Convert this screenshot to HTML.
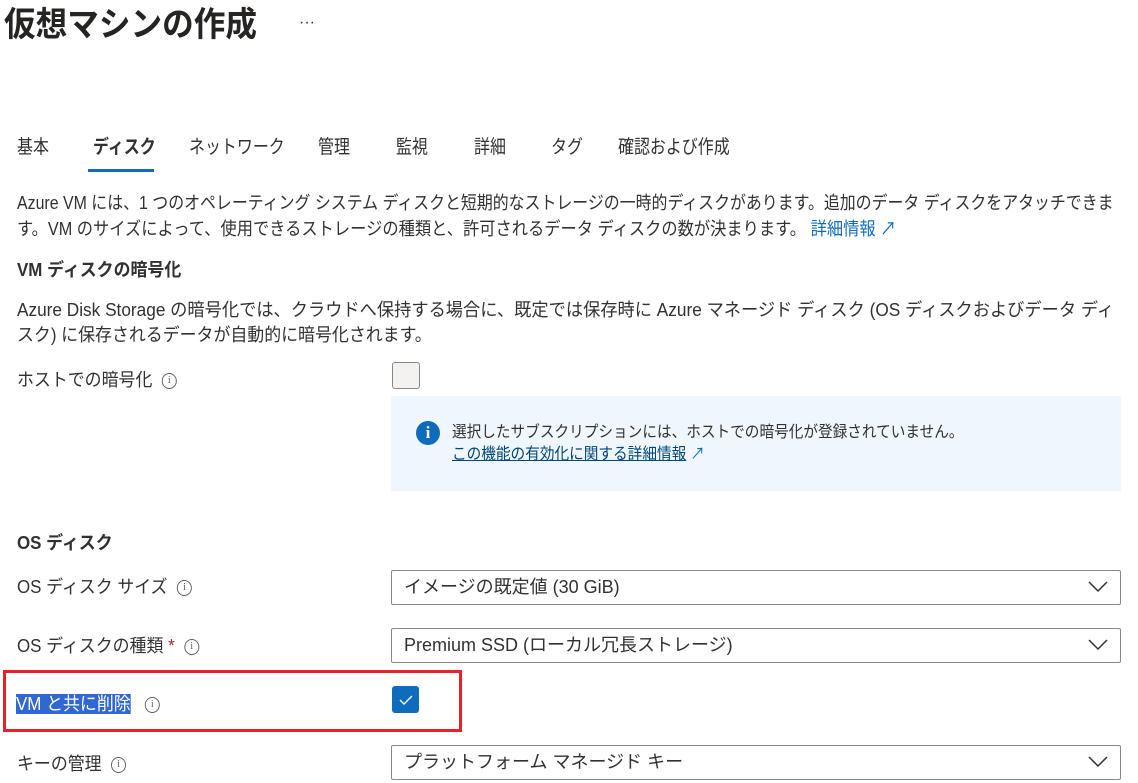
<!DOCTYPE html>
<html><head><meta charset="utf-8">
<style>
*{margin:0;padding:0;box-sizing:border-box}
body{width:1138px;height:783px;overflow:hidden;background:#fff;font-family:"Liberation Sans","Noto Sans CJK JP",sans-serif;color:#323130;position:relative}
.a{position:absolute;white-space:nowrap;transform-origin:left center}
.t{font-size:18px;line-height:26px}
.b{font-weight:bold}
.s2{transform:scaleX(0.94)}
.info{display:inline-block;width:16px;height:16px;border:1.3px solid #605e5c;border-radius:50%;font-size:11px;line-height:13px;text-align:center;color:#605e5c;font-family:"Liberation Serif",serif;vertical-align:middle}
.dd{position:absolute;left:391px;width:730px;height:35px;border:1px solid #8a8886;border-radius:2px;font-size:18px;line-height:33px;padding-left:12px;color:#323130}
.dd svg{position:absolute;right:12px;top:10px}
a{color:#0f6cbd;text-decoration:none}
.tab{position:absolute;top:134px;font-size:19px;line-height:28px;white-space:nowrap;transform-origin:left center;transform:scaleX(0.84)}
</style></head><body>
<div class="a b" style="left:4px;top:2px;font-size:34px;line-height:46px;color:#252423;transform:scaleX(0.93)">仮想マシンの作成</div>
<div class="a" style="left:299px;top:14px;font-size:16px;color:#323130">···</div>

<div class="tab" style="left:17px">基本</div>
<div class="tab b" style="left:93px">ディスク</div>
<div class="a" style="left:88px;top:169px;width:66px;height:3px;background:#0f6cbd"></div>
<div class="tab" style="left:189px">ネットワーク</div>
<div class="tab" style="left:318px">管理</div>
<div class="tab" style="left:396px">監視</div>
<div class="tab" style="left:474px">詳細</div>
<div class="tab" style="left:551px">タグ</div>
<div class="tab" style="left:618px">確認および作成</div>

<div class="a t" style="left:17px;top:190px;transform:scaleX(0.884)">Azure VM には、1 つのオペレーティング システム ディスクと短期的なストレージの一時的ディスクがあります。追加のデータ ディスクをアタッチできま</div>
<div class="a t" style="left:17px;top:216px;transform:scaleX(0.903)">す。VM のサイズによって、使用できるストレージの種類と、許可されるデータ ディスクの数が決まります。 <a>詳細情報 ↗</a></div>

<div class="a t b s2" style="left:17px;top:257px">VM ディスクの暗号化</div>
<div class="a t" style="left:17px;top:297px;transform:scaleX(0.957)">Azure Disk Storage の暗号化では、クラウドへ保持する場合に、既定では保存時に Azure マネージド ディスク (OS ディスクおよびデータ ディ</div>
<div class="a t" style="left:17px;top:322px;transform:scaleX(0.94)">スク) に保存されるデータが自動的に暗号化されます。</div>

<div class="a t s2" style="left:17px;top:367px">ホストでの暗号化 &nbsp;<span class="info">i</span></div>
<div class="a" style="left:392px;top:362px;width:28px;height:27px;border:1px solid #8a8886;border-radius:3px;background:#f3f2f1"></div>

<div class="a" style="left:391px;top:396px;width:730px;height:95px;background:#eff6fc"></div>
<div class="a" style="left:416px;top:421px;width:24px;height:24px;border-radius:50%;background:#0f6cbd;color:#fff;font-weight:bold;font-size:17px;line-height:24px;text-align:center;font-family:'Liberation Serif',serif">i</div>
<div class="a" style="left:452px;top:422px;font-size:16px;line-height:22px;transform:scaleX(0.915)">選択したサブスクリプションには、ホストでの暗号化が登録されていません。</div>
<div class="a" style="left:452px;top:444px;font-size:16px;line-height:22px;transform:scaleX(0.915)"><span style="color:#004578;text-decoration:underline">この機能の有効化に関する詳細情報</span> <span style="color:#0f6cbd">↗</span></div>

<div class="a t b s2" style="left:17px;top:530px">OS ディスク</div>

<div class="a t s2" style="left:17px;top:574px">OS ディスク サイズ &nbsp;<span class="info">i</span></div>
<div class="dd" style="top:570px">イメージの既定値 (30 GiB)<svg width="20" height="12"><path d="M1 1l9 9 9-9" fill="none" stroke="#323130" stroke-width="1.5"/></svg></div>

<div class="a t s2" style="left:17px;top:633px">OS ディスクの種類 <span style="color:#a4262c">*</span> &nbsp;<span class="info">i</span></div>
<div class="dd" style="top:628px">Premium SSD (ローカル冗長ストレージ)<svg width="20" height="12"><path d="M1 1l9 9 9-9" fill="none" stroke="#323130" stroke-width="1.5"/></svg></div>

<div class="a" style="left:3px;top:670px;width:459px;height:62px;border:3px solid #e8202a"></div>
<div class="a t s2" style="left:16px;top:691px"><span style="background:#3167d1;color:#fff">VM と共に削除</span> &nbsp;&nbsp;<span class="info">i</span></div>
<div class="a" style="left:392px;top:686px;width:27px;height:27px;border-radius:3px;background:#0f6cbd"><svg width="27" height="27"><path d="M8 14l4 4 8-8" fill="none" stroke="#fff" stroke-width="1.4"/></svg></div>

<div class="a t s2" style="left:17px;top:751px">キーの管理 &nbsp;<span class="info">i</span></div>
<div class="dd" style="top:745px">プラットフォーム マネージド キー<svg width="20" height="12"><path d="M1 1l9 9 9-9" fill="none" stroke="#323130" stroke-width="1.5"/></svg></div>
</body></html>
